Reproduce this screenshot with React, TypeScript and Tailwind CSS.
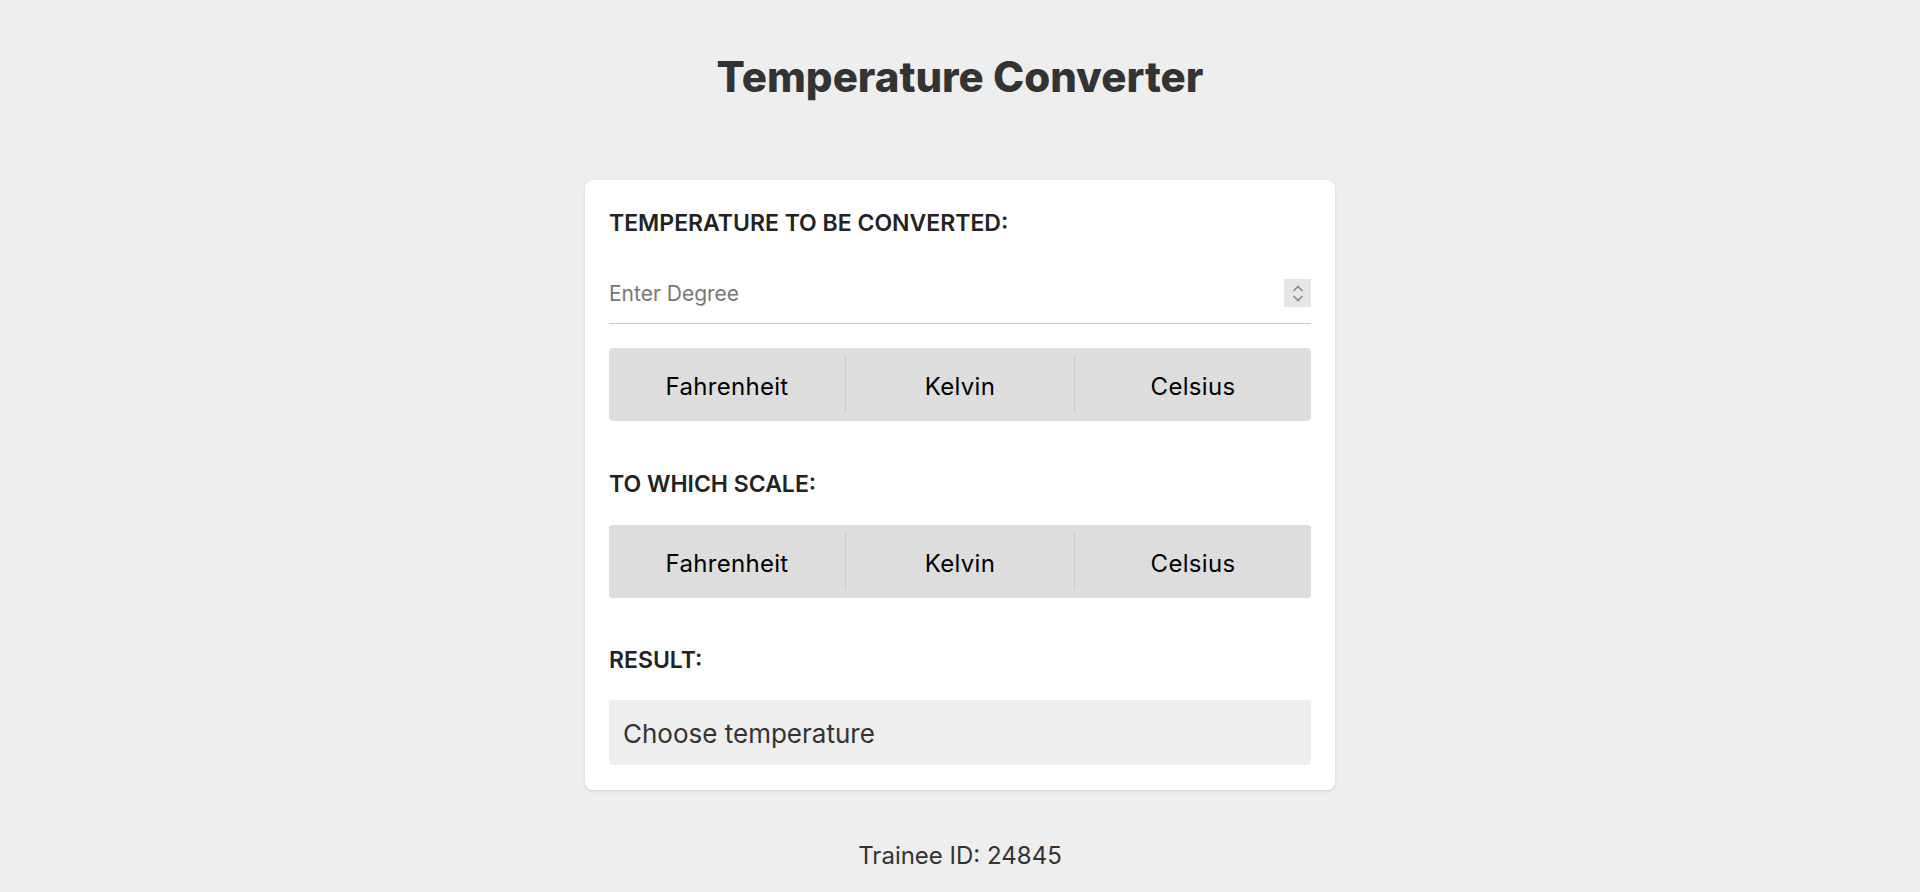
import React from "react";

function Segmented() {
  const btn =
    "flex items-center justify-center pt-[4px] text-[24px] leading-[36px] tracking-[0.3px] text-black";
  return (
    <div className="flex h-[73px] w-full items-stretch rounded-[4px] bg-[#dddddd]">
      <button className={`w-[236px] ${btn}`}>Fahrenheit</button>
      <div className="my-[8px] w-px bg-[#c8c8c8]" />
      <button className={`flex-1 ${btn}`}>Kelvin</button>
      <div className="my-[8px] w-px bg-[#c8c8c8]" />
      <button className={`w-[236px] ${btn}`}>Celsius</button>
    </div>
  );
}

function Spinner() {
  return (
    <div className="flex h-[28px] w-[27px] flex-col items-center justify-center gap-[3px] bg-[#e6e6e6]">
      <svg width="12" height="7" viewBox="0 0 12 7" fill="none">
        <path d="M1.5 6 L6 1.5 L10.5 6" stroke="#8a8a8a" strokeWidth="1.6" />
      </svg>
      <svg width="12" height="7" viewBox="0 0 12 7" fill="none">
        <path d="M1.5 1 L6 5.5 L10.5 1" stroke="#8a8a8a" strokeWidth="1.6" />
      </svg>
    </div>
  );
}

export default function App() {
  return (
    <div
      className="min-h-[892px] w-full bg-[#eeeeee] pt-[53px]"
      style={{ fontFamily: "Inter, 'Noto Sans', sans-serif" }}
    >
      <h1 className="text-center text-[42px] font-extrabold leading-[48px] text-[#333333]">
        Temperature Converter
      </h1>
      <div className="mx-auto mt-[79px] w-[750px] rounded-[8px] bg-white px-[24px] pb-[25px] pt-[24px] shadow-[0_1px_3px_rgba(0,0,0,0.12)]">
        <div className="pt-[1px] text-[23px] font-semibold leading-[36px] text-[#222222]">
          TEMPERATURE TO BE CONVERTED:
        </div>
        <div className="mt-[23px] flex h-[60px] items-start border-b border-[#cccccc] pt-[10px]">
          <div className="flex-1 text-[21px] leading-[40px] text-[#777777]">Enter Degree</div>
          <div className="mt-[5px]">
            <Spinner />
          </div>
        </div>
        <div className="mt-[24px]">
          <Segmented />
        </div>
        <div className="mt-[44px] pt-[1px] text-[23px] font-semibold leading-[36px] text-[#222222]">
          TO WHICH SCALE:
        </div>
        <div className="mt-[23px]">
          <Segmented />
        </div>
        <div className="mt-[44px] text-[23px] font-semibold leading-[36px] text-[#222222]">
          RESULT:
        </div>
        <div className="mt-[22px] flex h-[65px] items-center rounded-[3px] bg-[#eeeeee] px-[14px] pt-[2px] text-[26px] text-[#333333]">
          Choose temperature
        </div>
      </div>
      <div className="mt-[48px] text-center text-[24px] leading-[36px] text-[#333333]">
        Trainee ID: 24845
      </div>
    </div>
  );
}
